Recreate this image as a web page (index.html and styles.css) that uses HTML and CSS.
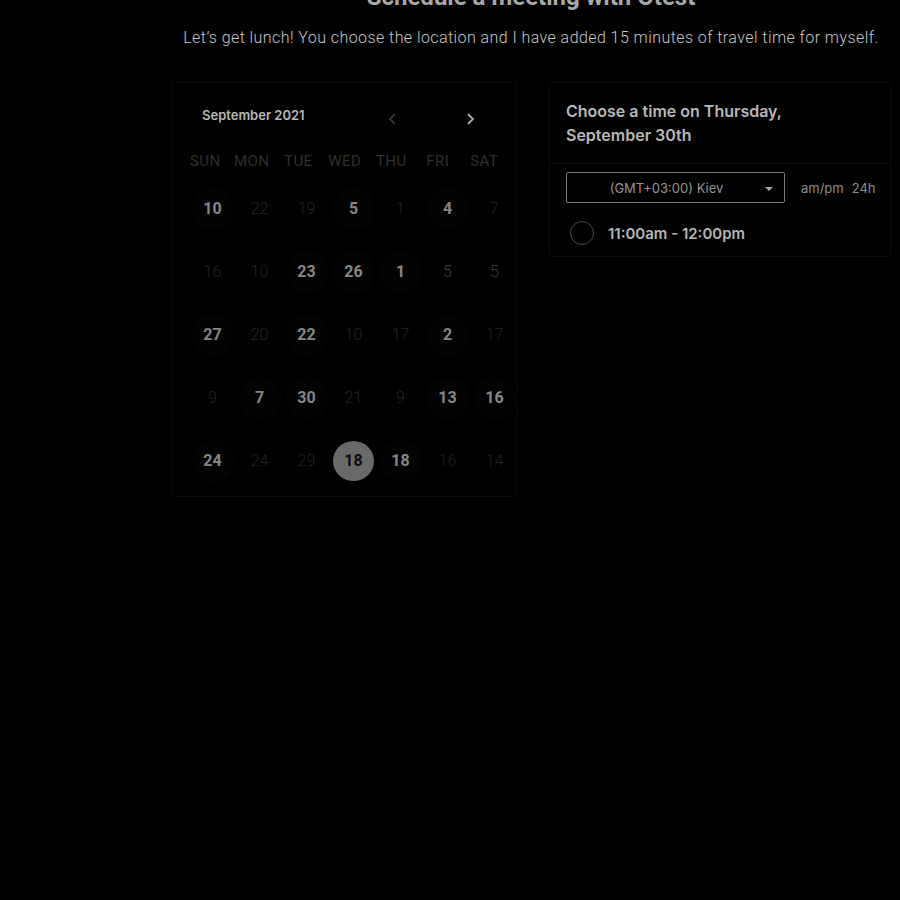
FILE: index.html
```html
<!DOCTYPE html>
<html>
<head>
<meta charset="utf-8">
<link rel="stylesheet" href="styles.css">
</head>
<body>
<div class="page">
  <header class="intro">
    <h1 class="title">Schedule a meeting with Otest</h1>
    <p class="subtitle">Let’s get lunch! You choose the location and I have added 15 minutes of travel time for myself.</p>
  </header>
  <main class="panels">
    <section class="calendar">
      <div class="cal-head">
        <span class="month">September 2021</span>
        <div class="nav">
          <svg class="arrow prev" width="12" height="14" viewBox="0 0 12 14"><path d="M8 2 L3 7 L8 12" fill="none" stroke="currentColor" stroke-width="1.6"/></svg>
          <svg class="arrow next" width="12" height="14" viewBox="0 0 12 14"><path d="M4 2 L9 7 L4 12" fill="none" stroke="currentColor" stroke-width="1.8"/></svg>
        </div>
      </div>
      <div class="weekdays">
        <span>SUN</span><span>MON</span><span>TUE</span><span>WED</span><span>THU</span><span>FRI</span><span>SAT</span>
      </div>
      <div class="days">
        <span class="day on ring">10</span><span class="day off">22</span><span class="day off">19</span><span class="day on ring">5</span><span class="day off">1</span><span class="day on ring">4</span><span class="day off">7</span>
        <span class="day off">16</span><span class="day off">10</span><span class="day on ring">23</span><span class="day on ring">26</span><span class="day on ring">1</span><span class="day dim">5</span><span class="day dim">5</span>
        <span class="day on ring">27</span><span class="day off">20</span><span class="day on ring">22</span><span class="day off">10</span><span class="day off">17</span><span class="day on ring">2</span><span class="day off">17</span>
        <span class="day off">9</span><span class="day on ring">7</span><span class="day on ring">30</span><span class="day off">21</span><span class="day off">9</span><span class="day on ring">13</span><span class="day on ring">16</span>
        <span class="day on ring">24</span><span class="day off">24</span><span class="day off">29</span><span class="day selected">18</span><span class="day on ring">18</span><span class="day off">16</span><span class="day off">14</span>
      </div>
    </section>
    <section class="times">
      <h2 class="times-title">Choose a time on Thursday,<br>September 30th</h2>
      <div class="times-body">
        <div class="tz-row">
          <div class="tz-select">
            <span class="tz-label">(GMT+03:00) Kiev</span>
            <span class="caret"></span>
          </div>
          <div class="fmt"><span>am/pm</span><span>24h</span></div>
        </div>
        <label class="slot">
          <span class="radio"></span>
          <span class="slot-text">11:00am - 12:00pm</span>
        </label>
      </div>
    </section>
  </main>
</div>
</body>
</html>
```

FILE: styles.css
```css
html, body {
  margin: 0;
  padding: 0;
  background: #000;
}
body {
  font-family: "Inter", "Roboto", sans-serif;
  color: #bbb;
}
.page {
  width: 720px;
  margin-left: 171px;
}
.intro {
  text-align: center;
  margin-top: -17px;
}
.title {
  font-family: "Roboto", sans-serif;
  font-weight: 700;
  font-size: 24px;
  line-height: 28px;
  margin: 0;
  color: #a8a8a8;
}
.subtitle {
  font-family: "Roboto", sans-serif;
  font-weight: 300;
  font-size: 16px;
  line-height: 24px;
  margin: 15px 0 0;
  color: #c8c8c8;
  letter-spacing: 0.43px;
}
.panels {
  display: flex;
  gap: 32px;
  align-items: flex-start;
  margin-top: 32px;
}
.calendar {
  width: 346px;
  box-sizing: border-box;
  border: 1px solid #0b0b0b;
  border-radius: 4px;
  padding: 14px 0 4px 10px;
}
.cal-head {
  display: flex;
  align-items: center;
  height: 36px;
}
.month {
  font-weight: 600;
  font-size: 13px;
  color: #b8b8b8;
  margin-left: 20px;
  width: 185px;
}
.nav {
  display: flex;
  gap: 65px;
  padding-top: 8px;
}
.arrow.prev { color: #3c3c3c; }
.arrow.next { color: #aaa; }
.weekdays {
  display: grid;
  grid-template-columns: repeat(7, 46.5px);
  height: 24px;
  align-items: center;
  margin-top: 16px;
}
.weekdays span {
  text-align: center;
  font-family: "Roboto", sans-serif;
  font-size: 15px;
  color: #303030;
  letter-spacing: 0.4px;
}
.days {
  display: grid;
  grid-template-columns: repeat(7, 47px);
  grid-auto-rows: 63px;
  margin-top: 4px;
  margin-left: 7px;
}
.day {
  justify-self: center;
  align-self: center;
  width: 42px;
  height: 42px;
  border-radius: 50%;
  display: flex;
  align-items: center;
  justify-content: center;
  font-family: "Roboto", sans-serif;
  font-size: 16px;
}
.day.on {
  font-weight: 700;
  color: #868686;
}
.day.ring {
  background: #030303;
}
.day.off {
  font-weight: 300;
  color: #242424;
}
.day.dim {
  font-weight: 300;
  color: #3e3e3e;
}
.day.selected {
  background: #696969;
  color: #0e0e0e;
  font-weight: 700;
  width: 41px;
  height: 40px;
}
.times {
  width: 342px;
  box-sizing: border-box;
  border: 1px solid #0b0b0b;
  border-radius: 4px;
}
.times-title {
  margin: 0;
  padding: 16px 16px 16px 16px;
  font-size: 16px;
  font-weight: 600;
  line-height: 24px;
  color: #b8b8b8;
  border-bottom: 1px solid #0e0e0e;
}
.times-body {
  padding: 8px 10px 11px 16px;
}
.tz-row {
  display: flex;
  align-items: center;
  gap: 16px;
}
.tz-select {
  position: relative;
  flex: none;
  width: 219px;
  height: 31px;
  box-sizing: border-box;
  border: 1px solid #7a7a7a;
  border-radius: 2px;
  display: flex;
  align-items: center;
  justify-content: center;
}
.tz-label {
  font-size: 13px;
  color: #959595;
  margin-left: -18px;
}
.caret {
  position: absolute;
  right: 11px;
  top: 14px;
  width: 0;
  height: 0;
  border-left: 4px solid transparent;
  border-right: 4px solid transparent;
  border-top: 4px solid #aaa;
}
.fmt {
  display: flex;
  flex: none;
  gap: 8px;
  font-size: 13px;
  color: #8e8e8e;
}
.slot {
  display: flex;
  align-items: center;
  gap: 14px;
  margin-top: 18px;
  padding-left: 4px;
}
.radio {
  width: 24px;
  height: 24px;
  box-sizing: border-box;
  border: 1.5px solid #4a4a4a;
  border-radius: 50%;
}
.slot-text {
  font-size: 15px;
  font-weight: 600;
  color: #b5b5b5;
}
```
